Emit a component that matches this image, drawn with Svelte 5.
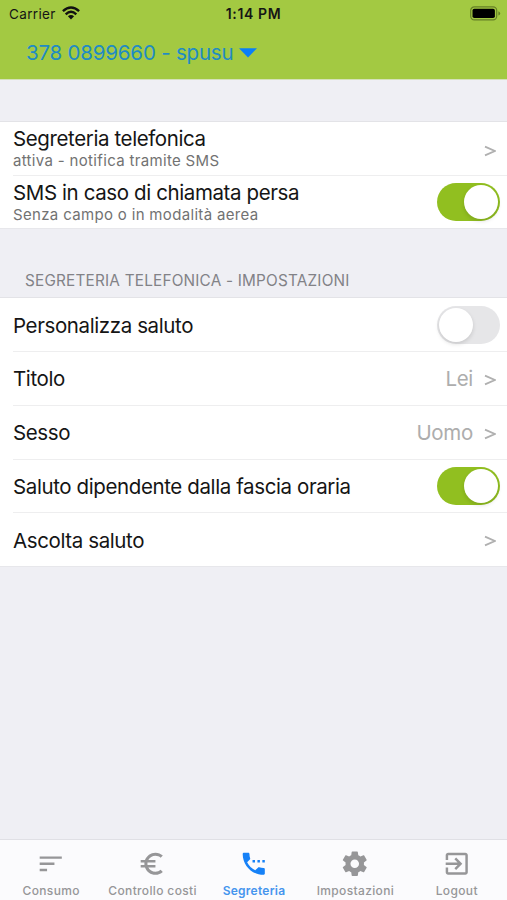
<script>
  const settings = [
    { label: 'Personalizza saluto', toggle: false },
    { label: 'Titolo', value: 'Lei' },
    { label: 'Sesso', value: 'Uomo' },
    { label: 'Saluto dipendente dalla fascia oraria', toggle: true },
    { label: 'Ascolta saluto' }
  ];
  const tabs = [
    { label: 'Consumo', icon: 'M3 18h6v-2H3v2zM3 6v2h18V6H3zm0 7h12v-2H3v2z' },
    { label: 'Controllo costi', icon: 'M15 18.5c-2.51 0-4.68-1.42-5.76-3.5H15v-2H8.58c-.05-.33-.08-.66-.08-1s.03-.67.08-1H15V9H9.24C10.32 6.92 12.5 5.5 15 5.5c1.61 0 3.09.59 4.23 1.57L21 5.3C19.41 3.87 17.3 3 15 3c-3.92 0-7.24 2.51-8.48 6H3v2h3.06c-.04.33-.06.66-.06 1s.02.67.06 1H3v2h3.52c1.24 3.49 4.56 6 8.48 6 2.31 0 4.41-.87 6-2.3l-1.78-1.77c-1.13.98-2.6 1.57-4.22 1.57z' },
    { label: 'Segreteria', active: true, icon: 'M13 9h-2v2h2V9zm4 0h-2v2h2V9zm3 6.5c-1.25 0-2.45-.2-3.57-.57-.35-.11-.74-.03-1.02.24l-2.2 2.2c-2.83-1.44-5.15-3.75-6.59-6.58l2.2-2.21c.28-.27.36-.66.25-1.01C8.7 6.45 8.5 5.25 8.5 4c0-.55-.45-1-1-1H4c-.55 0-1 .45-1 1 0 9.39 7.61 17 17 17 .55 0 1-.45 1-1v-3.5c0-.55-.45-1-1-1zM19 9v2h2V9h-2z' },
    { label: 'Impostazioni', icon: 'M19.43 12.98c.04-.32.07-.64.07-.98s-.03-.66-.07-.98l2.11-1.65c.19-.15.24-.42.12-.64l-2-3.46c-.12-.22-.39-.3-.61-.22l-2.49 1c-.52-.4-1.08-.73-1.69-.98l-.38-2.65C14.46 2.18 14.25 2 14 2h-4c-.25 0-.46.18-.49.42l-.38 2.65c-.61.25-1.17.59-1.69.98l-2.49-1c-.23-.09-.49 0-.61.22l-2 3.46c-.13.22-.07.49.12.64l2.11 1.65c-.04.32-.07.65-.07.98s.03.66.07.98l-2.11 1.65c-.19.15-.24.42-.12.64l2 3.46c.12.22.39.3.61.22l2.49-1c.52.4 1.08.73 1.69.98l.38 2.65c.03.24.24.42.49.42h4c.25 0 .46-.18.49-.42l.38-2.65c.61-.25 1.17-.59 1.69-.98l2.49 1c.23.09.49 0 .61-.22l2-3.46c.12-.22.07-.49-.12-.64l-2.11-1.65zM12 15.5c-1.93 0-3.5-1.57-3.5-3.5s1.57-3.5 3.5-3.5 3.5 1.57 3.5 3.5-1.57 3.5-3.5 3.5z' },
    { label: 'Logout', icon: 'M10.09 15.59L11.5 17l5-5-5-5-1.41 1.41L12.67 11H3v2h9.67l-2.58 2.59zM19 3H5c-1.11 0-2 .9-2 2v4h2V5h14v14H5v-4H3v4c0 1.1.89 2 2 2h14c1.1 0 2-.9 2-2V5c0-1.1-.9-2-2-2z' }
  ];
</script>

{#snippet chevron()}
  <svg class="chevron" width="12" height="12" viewBox="0 0 12 12"><path d="M1 1.6 10.8 6 1 10.4" /></svg>
{/snippet}

{#snippet toggle(on)}
  <span class="switch" class:on role="switch" aria-checked={on} tabindex="0"><i></i></span>
{/snippet}

<main>
  <header>
    <div class="status">
      <div class="carrier">
        <span>Carrier</span>
        <svg width="18" height="14" viewBox="0 0 18 14">
          <g fill="none" stroke="#111" stroke-width="2.4"><path d="M.9 5.2Q9-2.4 17.1 5.2" /><path d="M3.7 8.3Q9 3.3 14.3 8.3" /></g>
          <path d="M5.9 10.3Q9 7.6 12.1 10.3L9 13.5Z" fill="#111" />
        </svg>
      </div>
      <strong>1:14 PM</strong>
      <svg class="battery" width="31" height="15" viewBox="0 0 31 15">
        <rect x=".7" y=".9" width="26" height="13" rx="3.6" fill="none" stroke="#668026" stroke-width="1.2" />
        <rect x="2.5" y="2.8" width="22.4" height="9.2" rx="1.8" fill="#000" />
        <path d="M28.4 5.2Q30.2 6 30.2 7.4T28.4 9.6Z" fill="#668026" />
      </svg>
    </div>
    <div class="account">
      <span>378 0899660 - spusu</span>
      <svg width="18" height="10" viewBox="0 0 18 10"><path d="M0 .3H18L9 9.5Z" fill="#087ff8" /></svg>
    </div>
  </header>

  <section class="group first">
    <div class="row">
      <div class="copy"><b>Segreteria telefonica</b><small>attiva - notifica tramite SMS</small></div>
      {@render chevron()}
    </div>
    <div class="row">
      <div class="copy"><b>SMS in caso di chiamata persa</b><small>Senza campo o in modalità aerea</small></div>
      {@render toggle(true)}
    </div>
  </section>

  <h2>SEGRETERIA TELEFONICA - IMPOSTAZIONI</h2>

  <section class="group">
    {#each settings as item}
      <div class="row">
        <b>{item.label}</b>
        {#if item.toggle !== undefined}
          {@render toggle(item.toggle)}
        {:else}
          <div class="detail">{#if item.value}<span>{item.value}</span>{/if}{@render chevron()}</div>
        {/if}
      </div>
    {/each}
  </section>

  <nav>
    {#each tabs as tab}
      <div class="tab" class:active={tab.active}>
        <svg width="29.5" height="29.5" viewBox="0 0 24 24"><path d={tab.icon} /></svg>
        <span>{tab.label}</span>
      </div>
    {/each}
  </nav>
</main>

<style>
  :global(body) { margin: 0; }
  main { box-sizing: border-box; width: 507px; height: 900px; display: flex; flex-direction: column; overflow: hidden; background: #efeff4; font-family: Inter, Roboto, sans-serif; color: #151515; }
  header { height: 80px; flex: none; background: #a3c942; border-bottom: 1px solid #d5e1b9; box-sizing: border-box; }
  .status { height: 27px; display: grid; grid-template-columns: 1fr auto 1fr; align-items: center; padding: 0 6px 0 9px; font-size: 13.5px; }
  .carrier { display: flex; align-items: center; gap: 6px; letter-spacing: .35px; }
  .carrier svg { margin-top: -2px; }
  .status strong { font-weight: 600; font-size: 14px; letter-spacing: .6px; margin-right: 3px; }
  .battery { justify-self: end; }
  .account { height: 51px; display: flex; align-items: center; gap: 6px; padding-left: 26px; font-size: 20.5px; letter-spacing: -.2px; color: #208bc5; }
  .group { flex: none; background: #fff; border-top: 1px solid #e3e3e7; border-bottom: 1px solid #e7e7eb; }
  .first { margin-top: 41px; }
  .row { height: 53.75px; box-sizing: border-box; display: flex; align-items: center; justify-content: space-between; margin-left: 13px; padding-right: 7px; border-bottom: 1.5px solid #eeeeef; }
  .row:last-child { border-bottom: 0; height: 52.5px; }
  b { font-size: 20.5px; font-weight: 400; line-height: 24px; letter-spacing: -.39px; white-space: nowrap; padding-top: 2px; }
  .copy { display: flex; flex-direction: column; padding-top: 1px; }
  .copy b { line-height: 22px; }
  small { font-size: 15px; line-height: 20px; letter-spacing: .33px; color: #727272; white-space: nowrap; padding-top: 1px; }
  .chevron { fill: none; stroke: #b0b0b0; stroke-width: 1.7; margin-right: 4px; position: relative; top: 1px; }
  .copy + .chevron { top: 3px; }
  .detail { display: flex; align-items: center; gap: 11px; color: #adadad; font-size: 20.5px; letter-spacing: -.3px; padding-top: 1px; }
  .switch { display: flex; box-sizing: border-box; width: 63px; height: 38px; padding: 2px; border-radius: 19px; background: #e6e6e8; }
  .switch i { width: 34px; height: 34px; border-radius: 50%; background: #fff; box-shadow: 0 2px 4px #0002; }
  .switch.on { background: #91bf20; justify-content: flex-end; }
  h2 { height: 68px; box-sizing: border-box; margin: 0; padding: 41px 0 0 25px; font-size: 15.3px; line-height: 22px; font-weight: 400; letter-spacing: .21px; color: #828287; white-space: nowrap; }
  nav { height: 61px; flex: none; box-sizing: border-box; margin-top: auto; display: grid; grid-template-columns: repeat(5, 1fr); background: #fbfbfd; border-top: 1.5px solid #e0e0e5; }
  .tab { display: flex; flex-direction: column; align-items: center; color: #969698; font-size: 12px; font-weight: 500; line-height: 16px; letter-spacing: .35px; padding-top: 9px; white-space: nowrap; }
  .tab svg { fill: currentColor; flex: none; }
  .tab span { margin-top: 4px; padding-left: 1px; }
  .tab.active { color: #1681f7; }
  .tab.active span { font-weight: 600; color: #4695ee; letter-spacing: .25px; }
</style>
